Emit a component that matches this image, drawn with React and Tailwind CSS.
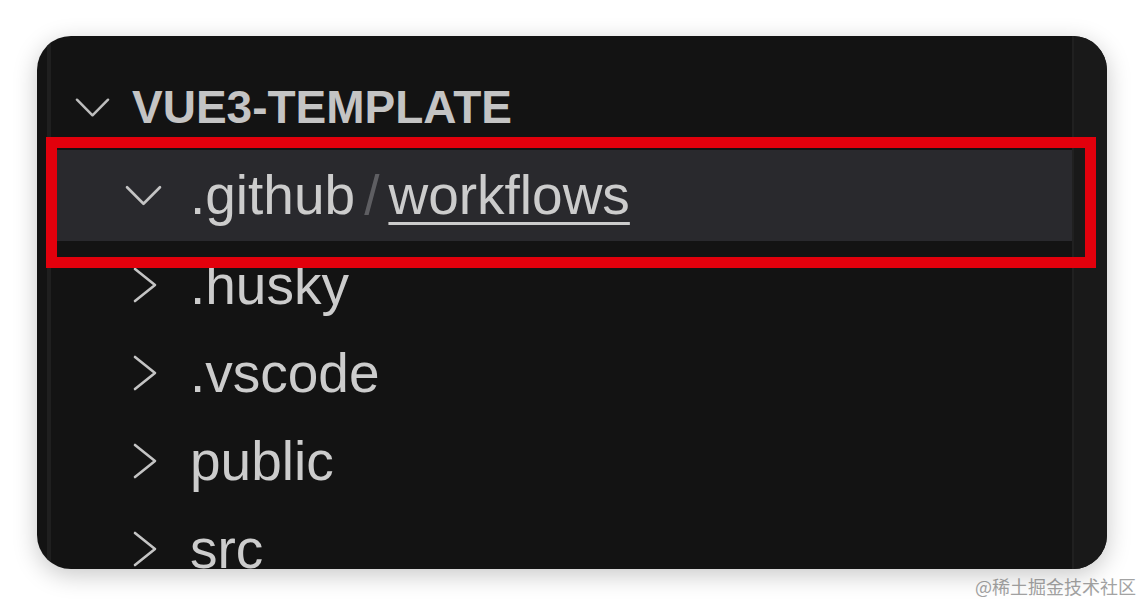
const rows = ['.husky', '.vscode', 'public', 'src']

function ChevronDown({ className }) {
  return (
    <svg viewBox="0 0 36 20" className={className} fill="none" stroke="currentColor" strokeWidth="2.6" strokeLinecap="round" strokeLinejoin="round">
      <path d="M2 2 L18 18 L34 2" />
    </svg>
  )
}

function ChevronRight({ className }) {
  return (
    <svg viewBox="0 0 24 36" className={className} fill="none" stroke="currentColor" strokeWidth="2.6" strokeLinecap="round" strokeLinejoin="round">
      <path d="M2 2 L22 18 L2 34" />
    </svg>
  )
}

export default function App() {
  return (
    <div className="h-[606px] w-[1144px] bg-white pl-[37px] pt-[36px]" style={{ fontFamily: '"Liberation Sans", Arial, sans-serif' }}>
      <div className="relative flex h-[533px] w-[1070px] overflow-hidden rounded-[34px] bg-[#131313] shadow-[0_6px_24px_rgba(0,0,0,0.22)]">
        <div className="w-[10px] shrink-0" />
        <div className="w-[4px] shrink-0 bg-[#1f1f1f]" />
        <div className="flex min-w-0 flex-1 flex-col">
          <div className="flex h-[114px] shrink-0 items-center pl-[24px] pt-[28px] text-[#c4c4c4]">
            <ChevronDown className="h-[21px] w-[35px] text-[#bdbdbd]" />
            <span className="ml-[22px] text-[46px] font-bold leading-none">VUE3-TEMPLATE</span>
          </div>
          <div className="flex h-[91px] shrink-0 items-center bg-[#29292d] pl-[74px] text-[#cccccc]">
            <ChevronDown className="h-[23px] w-[37px] text-[#c4c4c4]" />
            <span className="ml-[28px] text-[55px] leading-none">.github</span>
            <span className="mx-[9px] text-[55px] leading-none text-[#5e5e62]">/</span>
            <span className="text-[55px] leading-none underline decoration-[3px] underline-offset-[8px]">workflows</span>
          </div>
          {rows.map((name) => (
            <div key={name} className="flex h-[88px] shrink-0 items-center pl-[82px] text-[#cccccc]">
              <ChevronRight className="h-[36px] w-[24px] text-[#c4c4c4]" />
              <span className="ml-[33px] text-[55px] leading-none">{name}</span>
            </div>
          ))}
        </div>
        <div className="w-[35px] shrink-0 border-l-2 border-[#202020] bg-[#191919]" />
        <div className="absolute left-[9px] top-[101px] h-[131px] w-[1050px] border-[11px] border-[#e2000c]" />
      </div>
      <div className="flex justify-end pr-[8px] pt-[4px]">
        <span className="text-[18px] text-[#a3a3a3]" style={{ fontFamily: '"Noto Sans CJK SC", sans-serif' }}>@稀土掘金技术社区</span>
      </div>
    </div>
  )
}
